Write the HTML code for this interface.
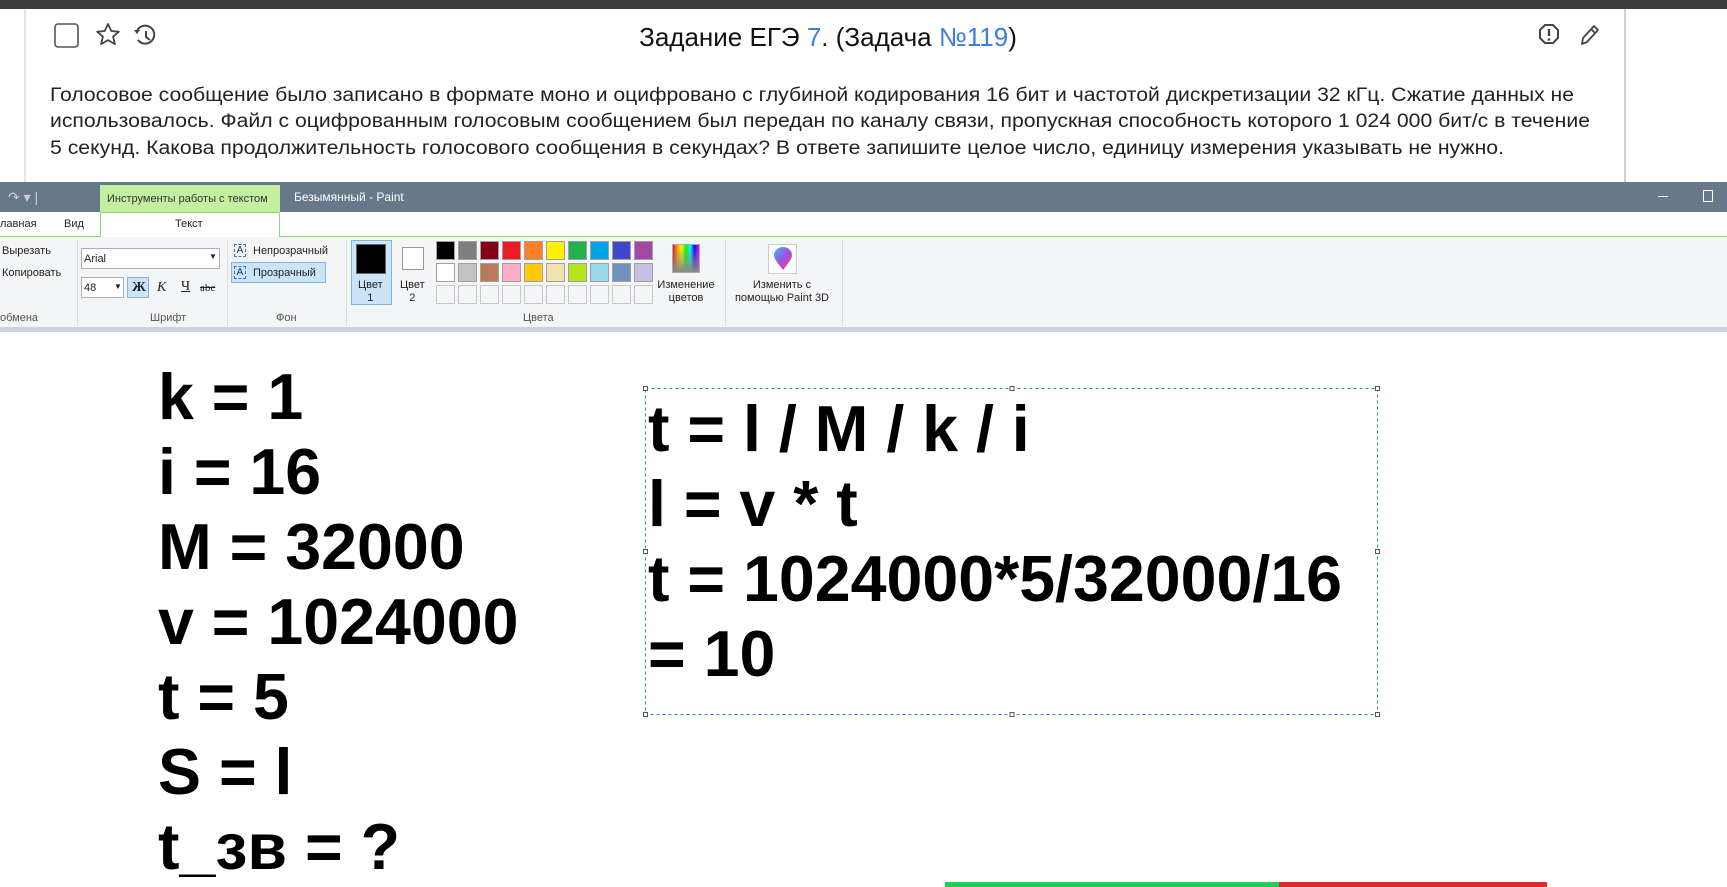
<!DOCTYPE html>
<html><head><meta charset="utf-8"><style>
*{margin:0;padding:0;box-sizing:border-box}
body{width:1727px;height:887px;overflow:hidden;background:#fff;font-family:"Liberation Sans",sans-serif;position:relative}
.a{position:absolute}
.s{font-family:"Liberation Sans",sans-serif;font-size:11px;color:#222;white-space:nowrap}
.sw{position:absolute;width:19px;height:19px;border:1px solid #a0a0a0}
.sep{position:absolute;top:240px;width:1px;height:86px;background:#dcdcdc}
</style></head><body>
<div class="a" style="left:0;top:0;width:1727px;height:9px;background:#3c3c3c"></div>
<div class="a" style="left:24px;top:9px;width:2px;height:173px;background:#e4e4e4"></div>
<div class="a" style="left:1624px;top:9px;width:2px;height:173px;background:#cfcfcf"></div>

<svg class="a" style="left:0;top:0" width="1727" height="182">
<rect x="55" y="24" width="23" height="23" rx="3" fill="none" stroke="#555" stroke-width="1.6"/>
<path d="M108 24 l3.3 7 7.5.7 -5.7 5 1.8 7.4 -6.9-4 -6.9 4 1.8-7.4 -5.7-5 7.5-.7z" fill="none" stroke="#444" stroke-width="1.8" stroke-linejoin="round"/>
<path d="M137 31 a9 9 0 1 1 1 9" fill="none" stroke="#444" stroke-width="2"/>
<path d="M134 30 l3 4 3-4" fill="#444"/>
<path d="M146 31 v6 l4 3" fill="none" stroke="#444" stroke-width="2"/>
<path d="M1545 25 h8 l5 5 v8 l-5 5 h-8 l-5-5 v-8z" fill="none" stroke="#444" stroke-width="2"/>
<path d="M1549 29 v7" stroke="#444" stroke-width="2.4"/><circle cx="1549" cy="39.5" r="1.3" fill="#444"/>
<path d="M1582 44 l1-6 11-12 4 4 -11 12z M1591 29 l4 4" fill="none" stroke="#444" stroke-width="1.8" stroke-linejoin="round"/>
<text x="828" y="46" text-anchor="middle" font-family="Liberation Sans" font-size="26" fill="#111">Задание ЕГЭ <tspan fill="#3b7fe0">7</tspan>. (Задача <tspan fill="#3b7fe0">№119</tspan>)</text>
<g font-family="Liberation Sans" font-size="19" fill="#222">
<text x="50" y="101" textLength="1524" lengthAdjust="spacingAndGlyphs">Голосовое сообщение было записано в формате моно и оцифровано с глубиной кодирования 16 бит и частотой дискретизации 32 кГц. Сжатие данных не</text>
<text x="50" y="127" textLength="1540" lengthAdjust="spacingAndGlyphs">использовалось. Файл с оцифрованным голосовым сообщением был передан по каналу связи, пропускная способность которого 1 024 000 бит/с в течение</text>
<text x="50" y="154" textLength="1454" lengthAdjust="spacingAndGlyphs">5 секунд. Какова продолжительность голосового сообщения в секундах? В ответе запишите целое число, единицу измерения указывать не нужно.</text>
</g>
</svg>

<div class="a" style="left:0;top:182px;width:1727px;height:30px;background:#68788b"></div>
<div class="a" style="left:100px;top:185px;width:180px;height:27px;background:#c4eea0"></div>
<div class="a s" style="left:107px;top:193px;color:#333">Инструменты работы с текстом</div>
<div class="a s" style="left:294px;top:190px;color:#fff;font-size:12px">Безымянный - Paint</div>
<div class="a s" style="left:8px;top:189px;color:#ccd;font-size:14px">↷ ▾ |</div>
<div class="a" style="left:1658px;top:196px;width:10px;height:1px;background:#fff"></div>
<div class="a" style="left:1703px;top:190px;width:10px;height:12px;border:1px solid #fff"></div>
<div class="a" style="left:0;top:212px;width:1727px;height:24px;background:#fff"></div>
<div class="a" style="left:0;top:236px;width:1727px;height:1px;background:#8fd870"></div>
<div class="a" style="left:100px;top:212px;width:180px;height:25px;border:1px solid #8fd870;border-bottom:none;background:#fff"></div>
<div class="a s" style="left:0;top:218px">лавная</div>
<div class="a s" style="left:64px;top:218px">Вид</div>
<div class="a s" style="left:175px;top:218px">Текст</div>
<div class="a" style="left:0;top:237px;width:1727px;height:90px;background:#f4f5f7"></div>
<div class="a" style="left:0;top:327px;width:1727px;height:5px;background:#ccd3df"></div>
<div class="sep" style="left:77px"></div><div class="sep" style="left:227px"></div><div class="sep" style="left:346px"></div><div class="sep" style="left:725px"></div><div class="sep" style="left:842px"></div>
<div class="a s" style="left:2px;top:245px">Вырезать</div>
<div class="a s" style="left:2px;top:267px">Копировать</div>
<div class="a s" style="left:0;top:312px;color:#555">обмена</div>
<div class="a" style="left:81px;top:248px;width:139px;height:21px;border:1px solid #a9b0bb;background:#fff"></div>
<div class="a s" style="left:84px;top:253px">Arial</div><div class="a s" style="left:209px;top:252px;font-size:8px">▼</div>
<div class="a" style="left:81px;top:277px;width:43px;height:21px;border:1px solid #a9b0bb;background:#fff"></div>
<div class="a s" style="left:84px;top:282px">48</div><div class="a s" style="left:114px;top:282px;font-size:8px">▼</div>
<div class="a" style="left:127px;top:277px;width:22px;height:21px;border:1px solid #7eb4ea;background:#cce4f7"></div>
<div class="a s" style="left:132px;top:280px;font-family:'Liberation Serif';font-weight:bold;font-size:14px">Ж</div>
<div class="a s" style="left:157px;top:280px;font-family:'Liberation Serif';font-style:italic;font-size:14px">К</div>
<div class="a s" style="left:181px;top:279px;font-family:'Liberation Serif';text-decoration:underline;font-size:14px">Ч</div>
<div class="a s" style="left:200px;top:282px;font-family:'Liberation Serif';text-decoration:line-through;font-size:11px">abc</div>
<div class="a s" style="left:150px;top:312px;color:#555">Шрифт</div>
<div class="a" style="left:234px;top:244px;width:12px;height:13px;border:1px dashed #3a7bd5;font-size:10px;color:#235;text-align:center;line-height:11px">A</div>
<div class="a s" style="left:253px;top:245px">Непрозрачный</div>
<div class="a" style="left:231px;top:262px;width:95px;height:21px;border:1px solid #7eb4ea;background:#cce4f7"></div>
<div class="a" style="left:234px;top:266px;width:12px;height:13px;border:1px dashed #3a7bd5;font-size:10px;color:#235;text-align:center;line-height:11px">A</div>
<div class="a s" style="left:253px;top:267px">Прозрачный</div>
<div class="a s" style="left:276px;top:312px;color:#555">Фон</div>
<div class="a" style="left:351px;top:240px;width:41px;height:65px;border:1px solid #7eb4ea;background:#cce4f7"></div>
<div class="a" style="left:356px;top:244px;width:30px;height:30px;border:1px solid #666;background:#000"></div>
<div class="a s" style="left:358px;top:279px;text-align:center;line-height:13px">Цвет<br>1</div>
<div class="a" style="left:402px;top:247px;width:22px;height:23px;border:1px solid #999;background:#fff"></div>
<div class="a s" style="left:400px;top:279px;text-align:center;line-height:13px">Цвет<br>2</div>
<div class="a s" style="left:523px;top:312px;color:#555">Цвета</div>
<div id="pal"></div>
<div class="a" style="left:672px;top:244px;width:28px;height:29px;border:1px solid #aaa;background:linear-gradient(to bottom,transparent,#888),linear-gradient(to right,red,orange,yellow,lime,cyan,blue,magenta)"></div>
<div class="a s" style="left:655px;top:279px;text-align:center;line-height:13px;width:62px">Изменение<br>цветов</div>
<div class="a" style="left:768px;top:244px;width:29px;height:30px;border:1px solid #ccc;background:#fff"></div>
<svg class="a" style="left:773px;top:247px" width="20" height="25"><defs><linearGradient id="g" x1="0" y1="0" x2="1" y2="1"><stop offset="0" stop-color="#38c0f0"/><stop offset=".5" stop-color="#a050e0"/><stop offset="1" stop-color="#ff4060"/></linearGradient></defs><path d="M10 23 C4 15 1 12 1 8 A9 8 0 0 1 19 8 C19 12 16 15 10 23z" fill="url(#g)"/></svg>
<div class="a s" style="left:727px;top:279px;text-align:center;line-height:13px;width:110px">Изменить с<br>помощью Paint 3D</div>

<svg class="a" style="left:0;top:332px" width="1727" height="555">
<g font-family="Liberation Sans" font-weight="bold" font-size="64.5" fill="#000">
<text x="158" y="87">k = 1</text>
<text x="158" y="162">i = 16</text>
<text x="158" y="237">M = 32000</text>
<text x="158" y="312">v = 1024000</text>
<text x="158" y="387">t = 5</text>
<text x="158" y="462">S = l</text>
<text x="158" y="537">t_зв = ?</text>
<text x="648" y="119">t = l / M / k / i</text>
<text x="648" y="194">l = v * t</text>
<text x="648" y="269">t = 1024000*5/32000/16</text>
<text x="648" y="344">= 10</text>
</g>
<rect x="645.5" y="56.5" width="732" height="326" fill="none" stroke="#2a80d0" stroke-dasharray="3 3"/>
<g fill="#fff" stroke="#555" stroke-width="1">
<rect x="643.5" y="54.5" width="4" height="4"/><rect x="1010" y="54.5" width="4" height="4"/><rect x="1375.5" y="54.5" width="4" height="4"/>
<rect x="643.5" y="217.5" width="4" height="4"/><rect x="1375.5" y="217.5" width="4" height="4"/>
<rect x="643.5" y="380.5" width="4" height="4"/><rect x="1010" y="380.5" width="4" height="4"/><rect x="1375.5" y="380.5" width="4" height="4"/>
</g>
<rect x="945" y="550" width="334" height="5" fill="#22cc55"/>
<rect x="1279" y="550" width="268" height="5" fill="#dd2b2b"/>
</svg>
<script>
var r1=["#000","#7f7f7f","#880015","#ed1c24","#ff7f27","#fff200","#22b14c","#00a2e8","#3f48cc","#a349a4"],
r2=["#fff","#c3c3c3","#b97a57","#ffaec9","#ffc90e","#efe4b0","#b5e61d","#99d9ea","#7092be","#c8bfe7"],h="";
for(var i=0;i<10;i++){var x=436+i*22;
h+='<div class="sw" style="left:'+x+'px;top:241px;background:'+r1[i]+'"></div>';
h+='<div class="sw" style="left:'+x+'px;top:263px;background:'+r2[i]+'"></div>';
h+='<div class="sw" style="left:'+x+'px;top:285px;background:#f4f5f7;border-color:#c8c8c8"></div>';}
document.getElementById("pal").innerHTML=h;
</script>
</body></html>
